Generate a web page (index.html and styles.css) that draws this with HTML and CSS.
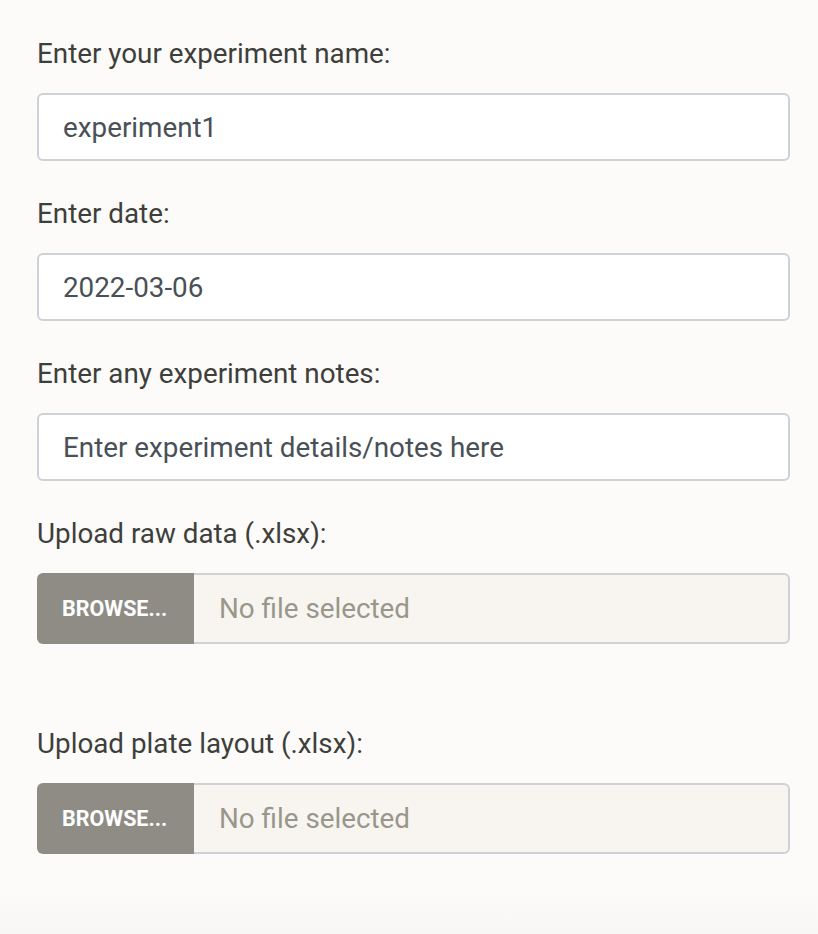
FILE: index.html
```html
<!DOCTYPE html>
<html>
<head>
<meta charset="utf-8">
<link rel="stylesheet" href="styles.css">
</head>
<body>
<div class="form">
  <div class="group">
    <label class="label">Enter your experiment name:</label>
    <div class="input">experiment1</div>
  </div>
  <div class="group">
    <label class="label">Enter date:</label>
    <div class="input">2022-03-06</div>
  </div>
  <div class="group">
    <label class="label">Enter any experiment notes:</label>
    <div class="input">Enter experiment details/notes here</div>
  </div>
  <div class="group file-group">
    <label class="label">Upload raw data (.xlsx):</label>
    <div class="file">
      <span class="browse">BROWSE...</span>
      <span class="file-name">No file selected</span>
    </div>
  </div>
  <div class="group file-group">
    <label class="label">Upload plate layout (.xlsx):</label>
    <div class="file">
      <span class="browse">BROWSE...</span>
      <span class="file-name">No file selected</span>
    </div>
  </div>
</div>
</body>
</html>
```

FILE: styles.css
```css
html, body {
  margin: 0;
  padding: 0;
}
body {
  background: linear-gradient(#fcfbfa 0, #fcfbfa 880px, #f8f7f5 934px);
  min-height: 934px;
  font-family: Roboto, "Liberation Sans", sans-serif;
  color: #3e3f3a;
}
.form {
  padding: 33px 28px 0 37px;
  display: flex;
  flex-direction: column;
}
.group {
  display: flex;
  flex-direction: column;
  margin-bottom: 32px;
}
.file-group {
  margin-bottom: 79px;
}
.label {
  font-size: 27.8px;
  line-height: 42px;
  margin-bottom: 18px;
  color: #3e3f3a;
}
.input {
  box-sizing: border-box;
  height: 68px;
  border: 2px solid #ced2d7;
  border-radius: 6px;
  background: #fff;
  padding: 0 24px;
  display: flex;
  align-items: center;
  font-size: 27.8px;
  color: #495057;
}
.file {
  display: flex;
  height: 71px;
}
.browse {
  box-sizing: border-box;
  width: 157px;
  background: #8e8c84;
  color: #fff;
  font-weight: 700;
  font-size: 21.5px;
  border-radius: 6px 0 0 6px;
  display: flex;
  align-items: center;
  padding-left: 25px;
}
.file-name {
  flex: 1;
  box-sizing: border-box;
  background: #f8f5f0;
  border: 2px solid #ced2d7;
  border-left: none;
  border-radius: 0 6px 6px 0;
  display: flex;
  align-items: center;
  padding-left: 25px;
  font-size: 27.8px;
  color: #98978b;
}
```
